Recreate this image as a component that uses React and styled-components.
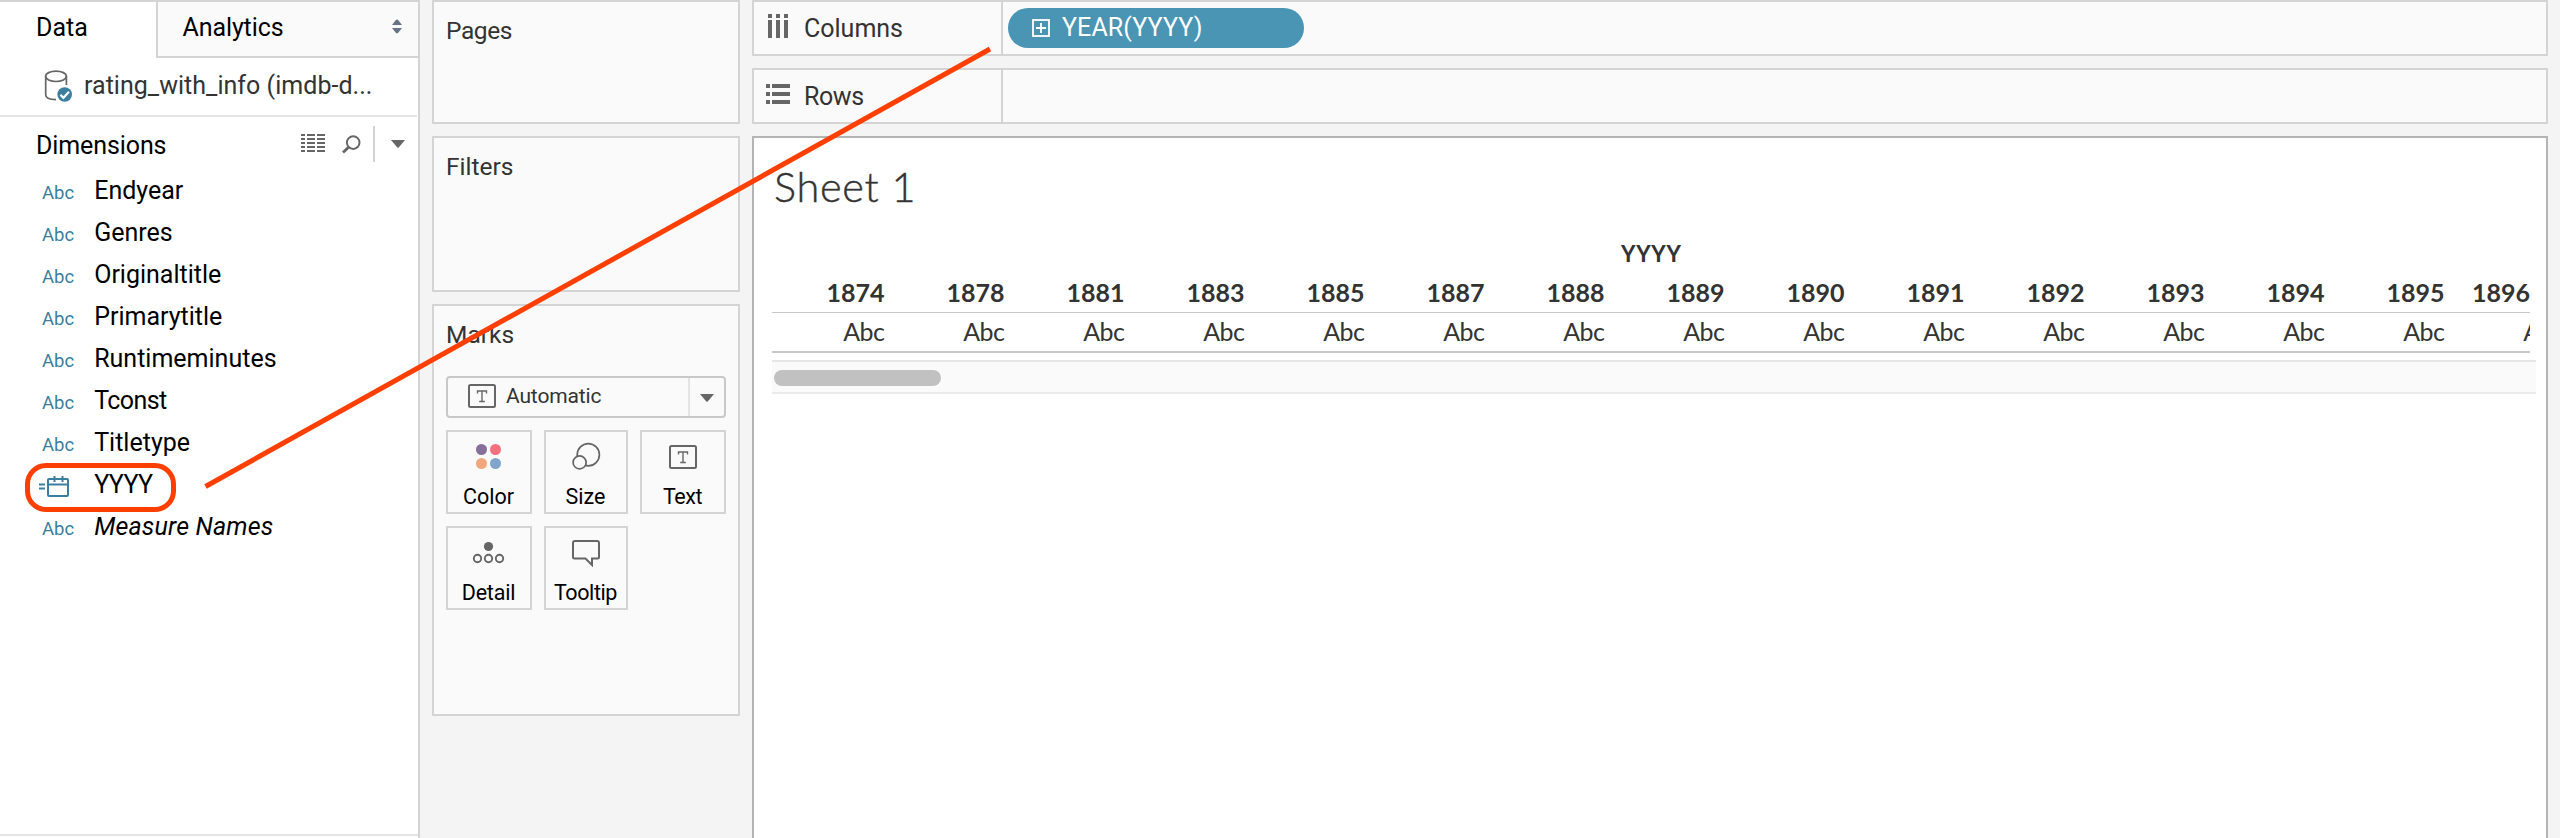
import React from 'react';
import styled, { createGlobalStyle } from 'styled-components';

const GlobalStyle = createGlobalStyle`
  * { box-sizing: border-box; }
  body { margin: 0; background: #f4f4f4; }
`;

const Workspace = styled.div`
  position: relative;
  display: flex;
  width: 2560px;
  height: 838px;
  overflow: hidden;
  background: #f4f4f4;
  color: #333;
  font: 400 25px Roboto, "Liberation Sans", sans-serif;
  white-space: nowrap;
`;

const Label = styled.span`
  letter-spacing: ${(p) => p.$track || 0}px;
`;

/* ---------- data pane ---------- */

const DataPane = styled.aside`
  display: flex;
  flex-direction: column;
  width: 420px;
  height: 838px;
  border-top: 2px solid #d4d4d4;
  border-right: 2px solid #d4d4d4;
  background: #fff;
`;

const Tabs = styled.div`
  display: flex;
  height: 56px;
  color: #000;
  line-height: 51px;
`;

const ActiveTab = styled.div`
  width: 156px;
  padding-left: 36px;
`;

const InactiveTab = styled.div`
  display: flex;
  justify-content: space-between;
  flex: 1;
  padding: 0 15px 0 24.5px;
  border-left: 2px solid #d4d4d4;
  border-bottom: 2px solid #d4d4d4;
  background: #fafafa;

  svg { margin-top: 17px; }
`;

const DataSource = styled.div`
  display: flex;
  height: 59px;
  margin-right: 1px;
  padding-left: 44px;
  border-bottom: 2px solid #e4e4e4;
  line-height: 55px;

  svg { margin: 11px 11px 0 0; }
`;

const SectionHeader = styled.div`
  display: flex;
  height: 53px;
  padding-left: 36px;
  color: #000;
  line-height: 57px;
`;

const SectionTools = styled.div`
  display: flex;
  align-items: flex-start;
  margin-left: auto;
  padding: 9px 13px 0 0;
`;

const ToolDivider = styled.div`
  width: 2px;
  height: 36px;
  margin: 0 16px 0 12px;
  background: #d4d4d4;
`;

const ToolIcon = styled.span`
  display: flex;
  margin: ${(p) => p.$margin};
`;

const FieldList = styled.ul`
  flex: 1;
  margin: 0;
  padding: 0;
  list-style: none;
`;

const Field = styled.li`
  display: flex;
  height: 42px;
  color: #000;
  font-style: ${(p) => (p.$italic ? 'italic' : 'normal')};
  line-height: 42px;
`;

const FieldType = styled.span`
  width: 94.2px;
  padding-left: ${(p) => (p.$calc ? 39 : 42)}px;
  color: #3a7f9f;
  font-size: 18.5px;
  font-style: normal;
  line-height: 46px;

  svg { display: block; margin-top: 11px; }
`;

const PaneFooter = styled.div`
  height: 4px;
  border-top: 2px solid #e4e4e4;
`;

/* ---------- cards ---------- */

const CardColumn = styled.div`
  display: flex;
  flex-direction: column;
  gap: 12px;
  width: 308px;
  margin-left: 12px;
`;

const Card = styled.section`
  height: ${(p) => p.$height}px;
  padding: 0 12px;
  border: 2px solid #d4d4d4;
  background: #fafafa;
`;

const CardTitle = styled.div`
  height: 70px;
  font-size: 24.5px;
  line-height: 58px;
`;

const MarkType = styled.div`
  display: flex;
  height: 42px;
  padding-left: 20px;
  border: 2px solid #c8c8c8;
  border-radius: 4px;
  font-size: 21px;
  line-height: 37px;

  > svg { margin: 6px 10px 0 0; }
`;

const MarkTypeArrow = styled.div`
  display: flex;
  justify-content: center;
  width: 36px;
  height: 38px;
  margin-left: auto;
  padding-top: 16px;
  border-left: 2px solid #e4e4e4;
`;

const MarkGrid = styled.div`
  display: grid;
  grid-template-columns: 86px 84px 86px;
  grid-auto-rows: 84px;
  gap: 12px;
  margin-top: 12px;
`;

const MarkButton = styled.div`
  display: flex;
  flex-direction: column;
  align-items: center;
  padding-right: 1px;
  border: 2px solid #d4d4d4;
  color: #000;
  font-size: 21.5px;
  line-height: 28px;

  svg { display: block; margin: 9px 0 12px; }
`;

/* ---------- shelves and sheet ---------- */

const Main = styled.main`
  display: flex;
  flex-direction: column;
  width: 1796px;
  margin-left: 12px;
`;

const Shelf = styled.div`
  display: flex;
  flex: none;
  height: 56px;
  margin-bottom: 12px;
  border: 2px solid #d4d4d4;
  background: #fafafa;
`;

const ShelfLabel = styled.div`
  display: flex;
  width: 249px;
  padding-left: 12px;
  border-right: 2px solid #d4d4d4;
  line-height: 53px;

  svg { flex: none; margin: 12px 14px 0 0; }
`;

const Pill = styled.div`
  display: flex;
  width: 296px;
  height: 40px;
  margin: 6px 0 0 5px;
  padding-left: 24px;
  border-radius: 20px;
  background: #4a95b3;
  color: #fff;
  line-height: 39px;

  svg { margin: 11px 12px 0 0; }
`;

const Sheet = styled.section`
  flex: 1;
  padding-left: 18px;
  border: 2px solid #b4b4b4;
  border-bottom: 0;
  background: #fff;
`;

const SheetTitle = styled.h1`
  margin: 0;
  padding-left: 2px;
  font: 300 41.5px/96px Lato, sans-serif;
  height: 96px;
  letter-spacing: 0.7px;
  -webkit-text-stroke: 0.4px #333;
`;

const Table = styled.div`
  width: 1758px;
  overflow: hidden;
  font-family: Lato, sans-serif;
`;

const FieldHeading = styled.div`
  font: 500 24.5px/39px Roboto, sans-serif;
  text-align: center;
`;

const YearRow = styled.div`
  display: flex;
  border-bottom: 1px solid #c8c8c8;
  font-weight: 700;
  line-height: 39px;
`;

const ValueRow = styled.div`
  display: flex;
  height: 40px;
  border-bottom: 2px solid #c8c8c8;
  letter-spacing: -0.5px;
  line-height: 37px;
`;

const Cell = styled.div`
  flex: none;
  width: ${(p) => p.$width || 120}px;
  padding-right: ${(p) => (p.$flush ? 0 : 7.5)}px;
  text-align: right;
`;

const ScrollTrack = styled.div`
  width: 1764px;
  height: 34px;
  margin-top: 7px;
  padding: 8px 2px;
  border-top: 2px solid #e6e6e6;
  border-bottom: 2px solid #ebebeb;
  background: #fafafa;
`;

const ScrollThumb = styled.div`
  width: 167px;
  height: 16px;
  border-radius: 8px;
  background: #c1c1c1;
`;

const Annotation = styled.svg`
  position: absolute;
  top: 0;
  left: 0;
  pointer-events: none;
`;

/* ---------- icons ---------- */

const SortArrows = () => (
  <svg width="12" height="16" viewBox="0 0 12 16" fill="#667386">
    <path d="M1 6 4.6 1.2Q6-.4 7.4 1.2L11 6zM1 9h10L7.4 13.5Q6 15.2 4.6 13.5z" />
  </svg>
);

const DatabaseIcon = () => (
  <svg width="29" height="33" viewBox="0 0 29 33" fill="none" stroke="#666" strokeWidth="1.7">
    <ellipse cx="12" cy="7.3" rx="10.4" ry="5.2" />
    <path d="M1.7 7.3V26c0 3.2 4 4.5 10.3 4.7M22.4 7.3V16" />
    <circle cx="20.7" cy="25.5" r="7.3" fill="#3a7f9f" stroke="none" />
    <path d="m16.4 25.8 3 3 5.6-6" stroke="#fff" strokeWidth="2.2" />
  </svg>
);

const ListIcon = () => (
  <svg width="24" height="18" viewBox="0 0 24 18" fill="#666">
    {[0, 4, 8, 12, 16].map((y) => (
      <path key={y} d={`M0 ${y}h4v2H0zM6 ${y}h8v2H6zM16 ${y}h8v2h-8z`} />
    ))}
  </svg>
);

const SearchIcon = () => (
  <svg width="19" height="19" viewBox="0 0 19 19" fill="none" stroke="#666">
    <circle cx="11.2" cy="7.6" r="6.3" strokeWidth="2" />
    <path d="M6.8 12 1 17.6" strokeWidth="2.8" />
  </svg>
);

const Caret = () => (
  <svg width="14" height="8" viewBox="0 0 14 8" fill="#666">
    <path d="M0 0h14L7.7 7.4q-.7.7-1.4 0z" />
  </svg>
);

const CalcDateIcon = () => (
  <svg width="30" height="22" viewBox="0 0 30 22" fill="none" stroke="#3a7f9f" strokeWidth="2">
    <path d="M0 9.5h6M0 13.5h6M9 9.5h20M15.5 1v6M23.5 1v6" />
    <rect x="9" y="4" width="20" height="17" rx="1" />
  </svg>
);

const TextIcon = () => (
  <svg width="28" height="24" viewBox="0 0 28 24" fill="none" stroke="#666">
    <rect x="1" y="1" width="26" height="22" rx="1.5" strokeWidth="2" />
    <path d="M9.5 9.5V7h9v2.5M14 7v10.5M11.2 17.5h5.6" strokeWidth="1.4" />
  </svg>
);

const ColorIcon = () => (
  <svg width="30" height="30" viewBox="0 0 30 30">
    <circle cx="7.5" cy="8.5" r="5.5" fill="#866f99" />
    <circle cx="21.5" cy="8.5" r="5.5" fill="#f7707f" />
    <circle cx="7.5" cy="22.5" r="5.5" fill="#f2a67d" />
    <circle cx="21.5" cy="22.5" r="5.5" fill="#82a5cc" />
  </svg>
);

const SizeIcon = () => (
  <svg width="30" height="30" viewBox="0 0 30 30" stroke="#666" strokeWidth="1.7" fill="#fafafa">
    <circle cx="17.3" cy="13.8" r="11.1" />
    <circle cx="8.6" cy="21.4" r="6.5" />
  </svg>
);

const TextMarkIcon = () => (
  <svg width="30" height="30" viewBox="0 0 30 30">
    <g transform="translate(1 4)">
      <TextIcon />
    </g>
  </svg>
);

const DetailIcon = () => (
  <svg width="34" height="30" viewBox="0 0 34 30" fill="none" stroke="#666" strokeWidth="1.9">
    <circle cx="16.5" cy="9.5" r="4.6" fill="#666" stroke="none" />
    <circle cx="5.5" cy="21.5" r="3.7" />
    <circle cx="16.5" cy="21.5" r="3.7" />
    <circle cx="27.5" cy="21.5" r="3.7" />
  </svg>
);

const TooltipIcon = () => (
  <svg width="30" height="30" viewBox="0 0 30 30" fill="none" stroke="#666" strokeWidth="2">
    <path d="M4 4h22q2 0 2 2v14q0 1.5-1.5 1.5H21V28l-6.500-6.500H3.500Q2 21.500 2 20V6q0-2 2-2z" />
  </svg>
);

const ColumnsIcon = () => (
  <svg width="24" height="24" viewBox="-2 0 24 24" fill="#666">
    {[0, 8, 16].map((x) => (
      <path key={x} d={`M${x} 0h4v4h-4zM${x} 6h4v18h-4z`} />
    ))}
  </svg>
);

const RowsIcon = () => (
  <svg width="24" height="24" viewBox="0 -2 24 24" fill="#666">
    {[0, 8, 16].map((y) => (
      <path key={y} d={`M0 ${y}h4v4H0zM6 ${y}h18v4H6z`} />
    ))}
  </svg>
);

const ExpandIcon = () => (
  <svg width="18" height="18" viewBox="0 0 18 18" fill="none" stroke="#fff">
    <rect x="1" y="1" width="16" height="16" strokeWidth="1.8" />
    <path d="M9 4v10M4 9h10" strokeWidth="1.8" />
  </svg>
);

/* ---------- content ---------- */

const fields = [
  { name: 'Endyear' },
  { name: 'Genres' },
  { name: 'Originaltitle' },
  { name: 'Primarytitle' },
  { name: 'Runtimeminutes' },
  { name: 'Tconst', track: -0.6 },
  { name: 'Titletype' },
  { name: 'YYYY', calc: true, track: -0.6 },
  { name: 'Measure Names', italic: true, track: 0.15 },
];

const years = [1874, 1878, 1881, 1883, 1885, 1887, 1888, 1889, 1890, 1891, 1892, 1893, 1894, 1895, 1896];

const marks = [
  { name: 'Color', Icon: ColorIcon },
  { name: 'Size', Icon: SizeIcon },
  { name: 'Text', Icon: TextMarkIcon, track: -0.5 },
  { name: 'Detail', Icon: DetailIcon, track: -0.2 },
  { name: 'Tooltip', Icon: TooltipIcon, track: -0.4 },
];

export default function App() {
  const last = years.length - 1;
  return (
    <>
      <GlobalStyle />
      <Workspace>
        <DataPane>
          <Tabs>
            <ActiveTab>Data</ActiveTab>
            <InactiveTab>
              <Label $track={-0.1}>Analytics</Label>
              <SortArrows />
            </InactiveTab>
          </Tabs>
          <DataSource>
            <DatabaseIcon />
            <Label $track={0.03}>rating_with_info (imdb-d...</Label>
          </DataSource>
          <SectionHeader>
            <Label $track={-0.1}>Dimensions</Label>
            <SectionTools>
              <ToolIcon $margin="8px 17px 0 0"><ListIcon /></ToolIcon>
              <ToolIcon $margin="9px 0 0"><SearchIcon /></ToolIcon>
              <ToolDivider />
              <ToolIcon $margin="14px 0 0"><Caret /></ToolIcon>
            </SectionTools>
          </SectionHeader>
          <FieldList>
            {fields.map((f) => (
              <Field key={f.name} $italic={f.italic}>
                <FieldType $calc={f.calc}>{f.calc ? <CalcDateIcon /> : 'Abc'}</FieldType>
                <Label $track={f.track}>{f.name}</Label>
              </Field>
            ))}
          </FieldList>
          <PaneFooter />
        </DataPane>

        <CardColumn>
          <Card $height={124}>
            <CardTitle><Label $track={-0.4}>Pages</Label></CardTitle>
          </Card>
          <Card $height={156}>
            <CardTitle><Label>Filters</Label></CardTitle>
          </Card>
          <Card $height={412}>
            <CardTitle>Marks</CardTitle>
            <MarkType>
              <TextIcon />
              <Label $track={-0.15}>Automatic</Label>
              <MarkTypeArrow><Caret /></MarkTypeArrow>
            </MarkType>
            <MarkGrid>
              {marks.map(({ name, Icon, track }) => (
                <MarkButton key={name}>
                  <Icon />
                  <Label $track={track}>{name}</Label>
                </MarkButton>
              ))}
            </MarkGrid>
          </Card>
        </CardColumn>

        <Main>
          <Shelf>
            <ShelfLabel>
              <ColumnsIcon />
              <Label>Columns</Label>
            </ShelfLabel>
            <Pill>
              <ExpandIcon />
              <Label $track={0.1}>YEAR(YYYY)</Label>
            </Pill>
          </Shelf>
          <Shelf>
            <ShelfLabel>
              <RowsIcon />
              <Label $track={-0.4}>Rows</Label>
            </ShelfLabel>
          </Shelf>
          <Sheet>
            <SheetTitle>Sheet 1</SheetTitle>
            <Table>
              <FieldHeading>YYYY</FieldHeading>
              <YearRow>
                {years.map((y, i) => (
                  <Cell key={y} $width={i === last ? 78 : 120} $flush={i === last}>{y}</Cell>
                ))}
              </YearRow>
              <ValueRow>
                {years.map((y) => (
                  <Cell key={y}>Abc</Cell>
                ))}
              </ValueRow>
            </Table>
            <ScrollTrack>
              <ScrollThumb />
            </ScrollTrack>
          </Sheet>
        </Main>

        <Annotation width="1010" height="540" fill="none" stroke="#ff3f00" strokeWidth="5">
          <rect x="27.5" y="465.5" width="146" height="44" rx="18.5" />
          <path d="M205.5 486.5 990 49" />
        </Annotation>
      </Workspace>
    </>
  );
}
